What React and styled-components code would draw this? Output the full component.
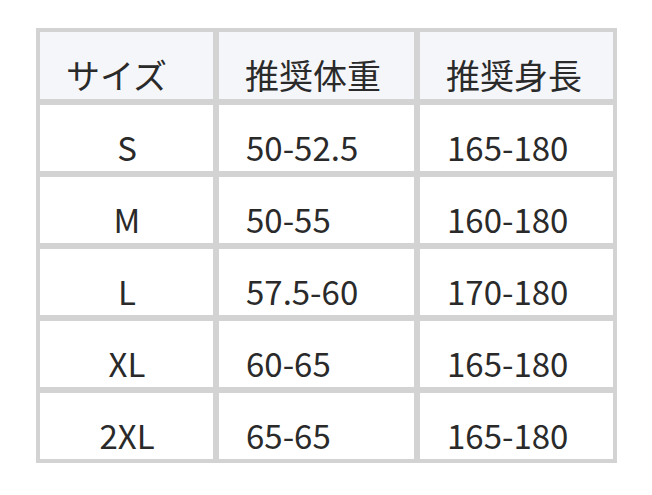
import React from "react";
import styled, { createGlobalStyle } from "styled-components";

const Global = createGlobalStyle`
  html, body { margin: 0; padding: 0; background: #ffffff; }
  body { font-family: "Noto Sans CJK JP", "Noto Sans", sans-serif; }
`;

const Page = styled.div`
  padding: 28px 36px;
`;

const Table = styled.table`
  border-collapse: separate;
  border-spacing: 0;
  border: 1px solid #d3d3d3;
  table-layout: fixed;
  width: 581px;
  color: #2a2a2a;
`;

const Col = styled.col`
  width: ${(p) => p.$w}px;
`;

const HeadCell = styled.th`
  background: #f5f6fa;
  border: 3px solid #d3d3d3;
  font-weight: 400;
  font-size: 34px;
  text-align: left;
  padding: 18px 26px 0;
  height: 67px;
  box-sizing: border-box;
  line-height: 49px;
  white-space: nowrap;
  vertical-align: bottom;
`;

const Cell = styled.td`
  background: #ffffff;
  border: 3px solid #d3d3d3;
  font-size: 33px;
  text-align: ${(p) => (p.$center ? "center" : "left")};
  padding: 18px 26px 0 27px;
  height: 67px;
  box-sizing: border-box;
  line-height: 48px;
  white-space: nowrap;
  vertical-align: bottom;
`;

const rows = [
  ["S", "50-52.5", "165-180"],
  ["M", "50-55", "160-180"],
  ["L", "57.5-60", "170-180"],
  ["XL", "60-65", "165-180"],
  ["2XL", "65-65", "165-180"],
];

export default function App() {
  return (
    <>
      <Global />
      <Page>
        <Table>
          <colgroup>
            <Col $w={179} />
            <Col $w={201} />
            <Col $w={199} />
          </colgroup>
          <thead>
            <tr>
              <HeadCell>サイズ</HeadCell>
              <HeadCell>推奨体重</HeadCell>
              <HeadCell>推奨身長</HeadCell>
            </tr>
          </thead>
          <tbody>
            {rows.map((r) => (
              <tr key={r[0]}>
                <Cell $center>{r[0]}</Cell>
                <Cell>{r[1]}</Cell>
                <Cell>{r[2]}</Cell>
              </tr>
            ))}
          </tbody>
        </Table>
      </Page>
    </>
  );
}
